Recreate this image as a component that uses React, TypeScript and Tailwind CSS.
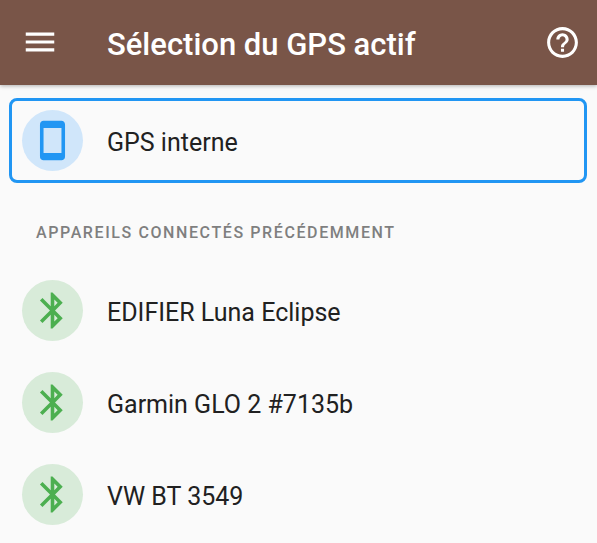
const devices = ["EDIFIER Luna Eclipse", "Garmin GLO 2 #7135b", "VW BT 3549"];

function MenuIcon() {
  return (
    <svg viewBox="0 0 24 24" className="size-[38px]" fill="currentColor" aria-hidden="true">
      <path d="M3 18h18v-2H3v2zm0-5h18v-2H3v2zm0-7v2h18V6H3z" />
    </svg>
  );
}

function HelpIcon() {
  return (
    <svg viewBox="0 0 24 24" className="size-[37px]" fill="currentColor" aria-hidden="true">
      <path d="M11 18h2v-2h-2v2zm1-16C6.480 2 2 6.480 2 12s4.480 10 10 10 10-4.480 10-10S17.520 2 12 2zm0 18c-4.410 0-8-3.590-8-8s3.590-8 8-8 8 3.590 8 8-3.590 8-8 8zm0-14c-2.210 0-4 1.790-4 4h2c0-1.100.9-2 2-2s2 .9 2 2c0 2-3 1.750-3 5h2c0-2.250 3-2.500 3-5 0-2.210-1.790-4-4-4z" />
    </svg>
  );
}

function PhoneIcon() {
  return (
    <svg viewBox="0 0 24 24" className="size-[43px]" fill="currentColor" aria-hidden="true">
      <path d="M17 1.010L7 1c-1.100 0-2 .9-2 2v18c0 1.100.9 2 2 2h10c1.100 0 2-.9 2-2V3c0-1.100-.9-1.990-2-1.990zM17 19H7V5h10v14z" />
    </svg>
  );
}

function BluetoothIcon() {
  return (
    <svg viewBox="0 0 24 24" className="size-[43px]" fill="currentColor" aria-hidden="true">
      <path d="M17.710 7.710L12 2h-1v7.590L6.410 5 5 6.410 10.590 12 5 17.590 6.410 19 11 14.410V22h1l5.710-5.710-4.300-4.290 4.300-4.290zM13 5.830l1.880 1.880L13 9.590V5.830zm1.880 10.460L13 18.170v-3.760l1.880 1.880z" />
    </svg>
  );
}

export default function App() {
  return (
    <div className="min-h-screen bg-[#fafafa] font-['Roboto','Liberation_Sans',sans-serif] text-[#212121]">
      <header className="flex h-[85px] items-center bg-[#795548] pr-4 pl-[21px] text-white shadow-[0_1px_4px_rgba(0,0,0,0.3)]">
        <button type="button" aria-label="Menu" className="mb-px shrink-0">
          <MenuIcon />
        </button>
        <h1 className="ml-12 flex-1 pt-1 text-[31px] leading-9 font-medium">Sélection du GPS actif</h1>
        <button type="button" aria-label="Aide" className="shrink-0">
          <HelpIcon />
        </button>
      </header>
      <main>
        <div className="pt-[13px] pr-[10px] pl-[9px]">
          <button type="button" className="flex w-full items-center gap-6 rounded-lg border-[3px] border-[#2196f3] px-[10px] py-[9px] text-left">
            <span className="flex size-[61px] shrink-0 items-center justify-center rounded-full bg-[#d0e6fa] text-[#2196f3]">
              <PhoneIcon />
            </span>
            <span className="pt-1 text-[25px] leading-8">GPS interne</span>
          </button>
        </div>
        <h2 className="px-9 pt-[38px] text-[16px] leading-6 font-medium tracking-widest text-[#7f7f7f] uppercase">
          Appareils connectés précédemment
        </h2>
        <ul className="pt-[19px]">
          {devices.map((name) => (
            <li key={name}>
              <button type="button" className="flex w-full items-center gap-6 px-[22px] pt-4 pb-[15px] text-left">
                <span className="flex size-[61px] shrink-0 items-center justify-center rounded-full bg-[#d8ebd9] text-[#4caf50]">
                  <BluetoothIcon />
                </span>
                <span className="pt-1 text-[25px] leading-8">{name}</span>
              </button>
            </li>
          ))}
        </ul>
      </main>
    </div>
  );
}
